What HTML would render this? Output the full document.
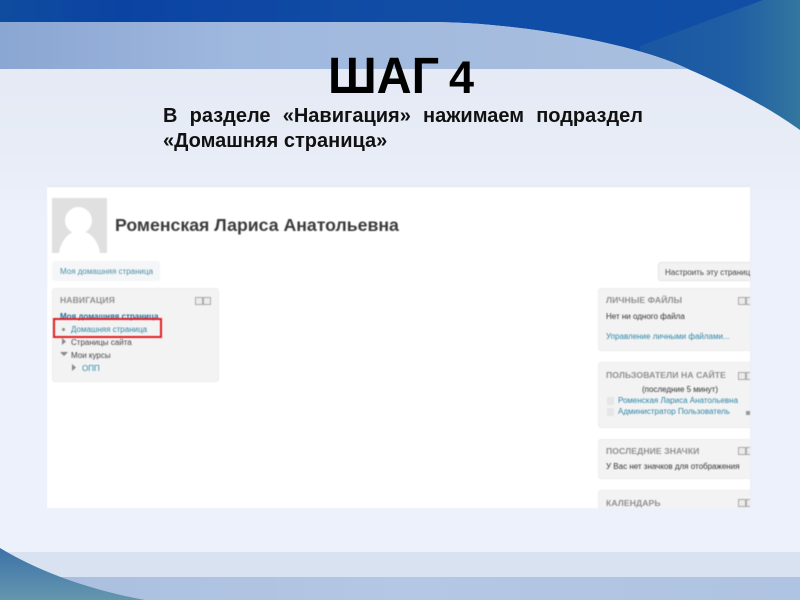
<!DOCTYPE html>
<html><head><meta charset="utf-8">
<style>
html,body{margin:0;padding:0;width:800px;height:600px;overflow:hidden;background:#e9eef8}
body{position:relative;font-family:"Liberation Sans",sans-serif}
div{position:absolute;white-space:nowrap}
svg{position:absolute;left:0;top:0}
.blur{filter:blur(.6px)}
.t{font-size:8px;color:#333;margin-top:1px}
.l{font-size:8px;color:#2d86a8;margin-top:1px}
.h{font-size:8.6px;font-weight:bold;color:#8f8f8f;letter-spacing:.1px}
.b{background:#f3f3f3;border:1px solid #ececec;border-radius:3px;box-sizing:border-box}
.ic{width:6px;height:6px;border:1px solid #aaa;background:#ececec}
.av{width:7px;height:8px;background:#e6e6e6}
</style></head><body>
<svg width="800" height="600" viewBox="0 0 800 600">
<defs>
<linearGradient id="top" x1="0" x2="1" y1="0" y2="0"><stop offset="0" stop-color="#0f4c9f"/><stop offset=".15" stop-color="#0b43a3"/><stop offset=".5" stop-color="#114da5"/><stop offset=".8" stop-color="#0f4da6"/><stop offset="1" stop-color="#1150a4"/></linearGradient>
<linearGradient id="hatch" x1="0" x2="1" y1="0" y2="0"><stop offset="0" stop-color="#1a56a4"/><stop offset=".6" stop-color="#1f5fa4"/><stop offset="1" stop-color="#33769f"/></linearGradient>
<linearGradient id="page" x1="0" x2="0" y1="0" y2="1"><stop offset="0" stop-color="#e3e8f4"/><stop offset=".25" stop-color="#e8edf7"/><stop offset=".35" stop-color="#edf1fb"/><stop offset="1" stop-color="#edf1fb"/></linearGradient>
<linearGradient id="band" x1="0" x2="1" y1="0" y2="0"><stop offset="0" stop-color="#8aa6d2"/><stop offset=".35" stop-color="#9fb8de"/><stop offset="1" stop-color="#a9bfdf"/></linearGradient>
<linearGradient id="bot" x1="0" x2="1" y1="0" y2="0"><stop offset="0" stop-color="#a9bedf"/><stop offset=".5" stop-color="#b4c7e4"/><stop offset="1" stop-color="#afc4e2"/></linearGradient>
<linearGradient id="corner" x1="0" x2="0" y1="0" y2="1"><stop offset="0" stop-color="#3c72aa"/><stop offset="1" stop-color="#6496ac"/></linearGradient>
</defs>
<rect width="800" height="600" fill="url(#page)"/>
<rect width="800" height="140" fill="url(#top)"/>
<path d="M763 0H800V140H640V46Z" fill="url(#hatch)"/>
<path d="M0 22H430C520 22 640 45 688 69C725 85 765 105 800 130V600H0Z" fill="url(#page)"/>
<path d="M0 22H430C520 22 640 45 688 69H0Z" fill="url(#band)"/>
<rect y="552" width="800" height="25" fill="#d8e2f0"/>
<rect y="577" width="800" height="23" fill="url(#bot)"/>
<path d="M0 548C40 572 90 590 145 600H0Z" fill="url(#corner)"/>
</svg>

<div style="left:328px;top:46px;font-size:51px;line-height:60px;font-weight:bold;color:#000;transform:scaleX(.95);transform-origin:left top">ШАГ</div>
<div style="left:449px;top:52px;font-size:45px;line-height:52px;font-weight:bold;color:#000">4</div>
<div style="left:163px;top:104px;width:480px;font-size:20px;line-height:24px;font-weight:bold;color:#111;display:flex;justify-content:space-between"><span>В</span><span>разделе</span><span>«Навигация»</span><span>нажимаем</span><span>подраздел</span></div>
<div style="left:163px;top:129px;font-size:20px;line-height:24px;font-weight:bold;color:#111">«Домашняя страница»</div>

<div style="left:47px;top:202px;width:1px;height:85px;background:#dfe4ec"></div>
<div style="left:47px;top:187px;width:703px;height:321px;background:#fff;overflow:hidden;box-shadow:0 -1px 1px #e3e5ec" class="blur">
  <div style="left:5px;top:11px;width:55px;height:55px;background:#e0e0e0;overflow:hidden">
    <div style="left:13px;top:9px;width:27px;height:27px;border-radius:50%;background:#fff"></div>
    <div style="left:7px;top:33px;width:41px;height:50px;border-radius:50%;background:#fff"></div>
  </div>
  <div style="left:68px;top:28px;font-size:17.7px;line-height:20px;font-weight:bold;color:#3b3b3b">Роменская Лариса Анатольевна</div>

  <div style="left:5px;top:74px;width:108px;height:20px;background:#f5f6f7;border-radius:3px"></div>
  <div class="l" style="left:13px;top:79px;color:#4a8fa8">Моя домашняя страница</div>

  <div class="b" style="left:5px;top:101px;width:167px;height:94px"></div>
  <div class="h" style="left:13px;top:108px">НАВИГАЦИЯ</div>
  <div class="ic" style="left:148px;top:110px"></div><div class="ic" style="left:156px;top:110px"></div>
  <div class="l" style="left:13px;top:124px;font-weight:bold;color:#1f6a96">Моя домашняя страница</div>
  <div style="left:15px;top:141px;width:3px;height:3px;background:#888;border-radius:50%"></div>
  <div class="l" style="left:24px;top:137px">Домашняя страница</div>
  <svg width="10" height="10" style="left:14px;top:150px"><path d="M1 1L5 4.5L1 8Z" fill="#888"/></svg>
  <div class="t" style="left:24px;top:150px;color:#444">Страницы сайта</div>
  <svg width="10" height="10" style="left:13px;top:164px"><path d="M0 1H8L4 5Z" fill="#888"/></svg>
  <div class="t" style="left:24px;top:163px;color:#444">Мои курсы</div>
  <svg width="10" height="10" style="left:24px;top:176px"><path d="M1 1L5 4.5L1 8Z" fill="#888"/></svg>
  <div class="l" style="left:35px;top:176px">ОПП</div>
  <div style="left:6px;top:131px;border:2px solid #e01f26;width:105px;height:16px"></div>

  <div style="left:611px;top:75px;width:110px;height:19px;background:#f2f2f2;border:1px solid #e2e2e2;border-radius:3px;box-sizing:border-box"></div>
  <div class="t" style="left:618px;top:80px;color:#444">Настроить эту страницу</div>

  <div class="b" style="left:551px;top:101px;width:170px;height:63px"></div>
  <div class="h" style="left:559px;top:108px">ЛИЧНЫЕ ФАЙЛЫ</div>
  <div class="ic" style="left:691px;top:110px"></div><div class="ic" style="left:699px;top:110px"></div>
  <div class="t" style="left:559px;top:124px">Нет ни одного файла</div>
  <div class="l" style="left:559px;top:144px">Управление личными файлами...</div>

  <div class="b" style="left:551px;top:175px;width:170px;height:66px"></div>
  <div class="h" style="left:559px;top:183px">ПОЛЬЗОВАТЕЛИ НА САЙТЕ</div>
  <div class="ic" style="left:691px;top:185px"></div><div class="ic" style="left:699px;top:185px"></div>
  <div class="t" style="left:595px;top:197px">(последние 5 минут)</div>
  <div class="av" style="left:560px;top:210px"></div>
  <div class="l" style="left:571px;top:208px">Роменская Лариса Анатольевна</div>
  <div class="av" style="left:560px;top:221px"></div>
  <div class="l" style="left:571px;top:219px">Администратор Пользователь</div>
  <div style="left:699px;top:224px;width:5px;height:4px;background:#999"></div>

  <div class="b" style="left:551px;top:252px;width:170px;height:40px"></div>
  <div class="h" style="left:559px;top:259px">ПОСЛЕДНИЕ ЗНАЧКИ</div>
  <div class="ic" style="left:691px;top:260px"></div><div class="ic" style="left:699px;top:260px"></div>
  <div class="t" style="left:559px;top:274px">У Вас нет значков для отображения</div>

  <div class="b" style="left:551px;top:303px;width:170px;height:30px"></div>
  <div class="h" style="left:559px;top:311px">КАЛЕНДАРЬ</div>
  <div class="ic" style="left:691px;top:312px"></div><div class="ic" style="left:699px;top:312px"></div>
</div>
</body></html>
